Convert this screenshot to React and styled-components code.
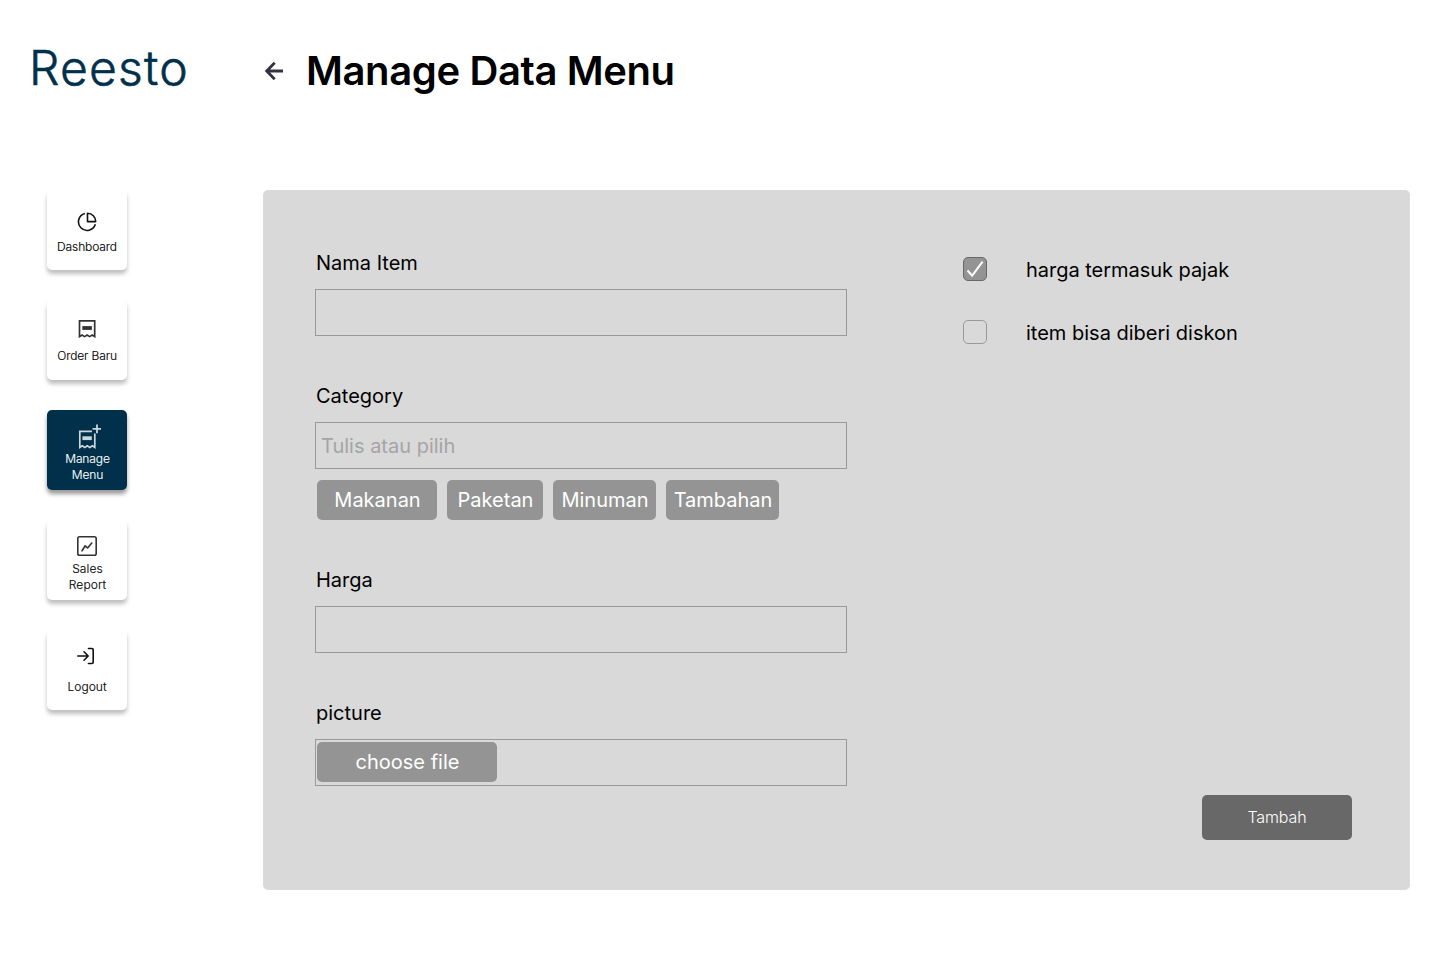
import React from 'react';
import styled, { createGlobalStyle } from 'styled-components';

const GlobalStyle = createGlobalStyle`
  * { box-sizing: border-box; }
  body { margin: 0; background: #fff; font-family: Inter, sans-serif; color: #000; }
  button, input { font-family: inherit; }
`;

const Page = styled.div`
  display: grid;
  grid-template-columns: 263px 1147px;
  grid-template-rows: 190px 700px;
  width: 1440px;
  height: 960px;
  overflow: hidden;
`;

const Logo = styled.div`
  padding: 39px 0 0 29px;
  font-size: 48px;
  line-height: 58px;
  font-weight: 300;
  letter-spacing: 1.2px;
  color: #00304a;
  -webkit-text-stroke: 0.6px #00304a;
  white-space: nowrap;
`;

const Header = styled.header`
  display: flex;
  align-items: flex-start;
  padding-top: 46px;
`;

const BackButton = styled.button`
  width: 22px;
  height: 50px;
  padding: 0;
  border: 0;
  background: none;
  display: flex;
  align-items: center;
  margin-right: 21px;
`;

const Title = styled.h1`
  margin: 0;
  font-size: 40px;
  line-height: 50px;
  font-weight: 600;
  letter-spacing: -0.38px;
  white-space: nowrap;
`;

const Nav = styled.nav`
  display: flex;
  flex-direction: column;
  gap: 30px;
  padding-left: 47px;
`;

const NavCard = styled.a`
  display: flex;
  flex-direction: column;
  align-items: center;
  width: 80px;
  height: 80px;
  padding-top: ${(p) => p.$top}px;
  border-radius: 5px;
  background: ${(p) => (p.$active ? '#00304a' : '#fff')};
  color: ${(p) => (p.$active ? '#fff' : '#000')};
  box-shadow: 0 4px 4px rgba(0, 0, 0, ${(p) => (p.$active ? 0.4 : 0.25)});
  svg { display: block; flex: none; }
`;

const NavLabel = styled.span`
  margin-top: ${(p) => p.$gap}px;
  padding-left: ${(p) => p.$shift || 0}px;
  font-size: 12px;
  line-height: 16px;
  font-weight: 300;
  -webkit-text-stroke: 0.15px currentColor;
  letter-spacing: ${(p) => p.$track}px;
  text-align: center;
  white-space: pre-line;
`;

const Panel = styled.main`
  display: flex;
  justify-content: space-between;
  background: #d9d9d9;
  border-radius: 5px;
  padding: 60px 58px 50px 52px;
`;

const Form = styled.form`
  width: 532px;
`;

const Field = styled.div`
  display: flex;
  flex-direction: column;
  height: ${(p) => p.$height}px;
`;

const Label = styled.label`
  height: 39px;
  padding-left: 1px;
  font-size: 20px;
  line-height: 26px;
`;

const Input = styled.input`
  width: 532px;
  height: 47px;
  padding: 0 5px;
  border: 1px solid #999;
  border-radius: 0;
  outline: 0;
  background: transparent;
  font-size: 20px;
  &::placeholder { color: #a5a5a5; opacity: 1; }
`;

const FileBox = styled.div`
  width: 532px;
  height: 47px;
  padding: 2px 1px;
  border: 1px solid #999;
`;

const Chips = styled.div`
  display: flex;
  gap: 10px;
  padding: 11px 0 0 2px;
`;

const Chip = styled.button`
  width: ${(p) => p.$width}px;
  height: 40px;
  padding: 0 0 0 1px;
  border: 0;
  border-radius: 5px;
  background: #949494;
  color: #fff;
  font-size: 20px;
  line-height: 40px;
  white-space: nowrap;
`;

const Side = styled.aside`
  display: flex;
  flex-direction: column;
  width: 389px;
  padding-top: 7px;
`;

const Option = styled.label`
  display: flex;
  align-items: flex-start;
  gap: 39px;
  height: 63px;
  font-size: 20px;
  line-height: 26px;
  letter-spacing: ${(p) => p.$track || 0}px;
`;

const CheckBox = styled.span`
  display: flex;
  flex: none;
  width: 24px;
  height: 24px;
  border: 1px solid ${(p) => (p.$checked ? '#686868' : '#999')};
  border-radius: 5px;
  background: ${(p) => (p.$checked ? '#949494' : 'transparent')};
`;

const Submit = styled.button`
  width: 150px;
  height: 45px;
  margin: auto 0 0 auto;
  padding: 0 0 2px;
  border: 0;
  border-radius: 5px;
  background: #686868;
  color: #fff;
  font-size: 16px;
  font-weight: 300;
  letter-spacing: -0.1px;
`;

const BackIcon = () => (
  <svg width="22" height="22" viewBox="0 0 22 22" fill="none" stroke="#343140" strokeWidth="2.8">
    <path d="M20 11H4M11.7 2.8L3.7 11L11.7 19.2" />
  </svg>
);

const PieIcon = () => (
  <svg width="20" height="20" viewBox="0 0 20 20" fill="none" stroke="#111" strokeWidth="1.6" strokeLinejoin="round">
    <path d="M7.9 1.5A8.6 8.6 0 1 0 18.3 12.3" />
    <path d="M10.5 1.2V9.6H18.7A8.3 8.3 0 0 0 10.5 1.2Z" />
  </svg>
);

const OrderIcon = () => (
  <svg width="18" height="19" viewBox="0 0 18 19" fill="none" stroke="#333">
    <path d="M1.5 17.6V1.8H16.7V17.6L14.2 16L11.7 17.6L9.1 16L6.6 17.6L4 16Z" strokeWidth="1.7" />
    <path d="M4.3 9H13.9" strokeWidth="3.8" />
  </svg>
);

const ManageIcon = () => (
  <svg width="28" height="26" viewBox="0 0 28 26" fill="none" stroke="#ccd6db">
    <path d="M19 8.4H6.8V24.4L9.3 22.8L11.8 24.4L14.3 22.8L16.8 24.4L19.3 22.8L21.8 24.4V10.5" strokeWidth="1.7" />
    <path d="M9.4 15.2H18.8" strokeWidth="3.8" />
    <path d="M24 1.4V10.2M19.6 5.8H28" strokeWidth="1.8" />
  </svg>
);

const ChartIcon = () => (
  <svg width="20" height="20" viewBox="0 0 20 20" fill="none" stroke="#333" strokeWidth="1.6" strokeLinecap="round" strokeLinejoin="round">
    <rect x="0.8" y="0.8" width="18.4" height="18.4" rx="1.8" />
    <path d="M5 14.8L8.2 9.8L10.6 12L14.8 7" />
  </svg>
);

const LogoutIcon = () => (
  <svg width="20" height="18" viewBox="0 0 20 18" fill="none" stroke="#111" strokeWidth="1.6" strokeLinecap="round" strokeLinejoin="round">
    <path d="M0.8 9H11M7 4.8L11.2 9L7 13.2M11.5 1.5H15Q16.2 1.5 16.2 2.7V15.3Q16.2 16.5 15 16.5H11.5" />
  </svg>
);

const CheckIcon = () => (
  <svg width="22" height="22" viewBox="0 0 22 22" fill="none" stroke="#fff" strokeWidth="2">
    <path d="M3.5 12.5L8.2 17.7L18.6 3.7" />
  </svg>
);

export default function App() {
  return (
    <Page>
      <GlobalStyle />
      <Logo>Reesto</Logo>
      <Header>
        <BackButton aria-label="Back"><BackIcon /></BackButton>
        <Title>Manage Data Menu</Title>
      </Header>
      <Nav>
        <NavCard $top={22}><PieIcon /><NavLabel $gap={7} $track={-0.1}>Dashboard</NavLabel></NavCard>
        <NavCard $top={19}><OrderIcon /><NavLabel $gap={10} $track={-0.12}>Order Baru</NavLabel></NavCard>
        <NavCard $top={13} $active><ManageIcon /><NavLabel $gap={2} $shift={1} $track={-0.1}>{'Manage\nMenu'}</NavLabel></NavCard>
        <NavCard $top={16}><ChartIcon /><NavLabel $gap={5} $shift={1} $track={0.1}>{'Sales\nReport'}</NavLabel></NavCard>
        <NavCard $top={17}><LogoutIcon /><NavLabel $gap={14} $track={0.05}>Logout</NavLabel></NavCard>
      </Nav>
      <Panel>
        <Form>
          <Field $height={133}>
            <Label htmlFor="name">Nama Item</Label>
            <Input id="name" />
          </Field>
          <Field $height={184}>
            <Label htmlFor="category">Category</Label>
            <Input id="category" placeholder="Tulis atau pilih" />
            <Chips>
              <Chip type="button" $width={120}>Makanan</Chip>
              <Chip type="button" $width={96}>Paketan</Chip>
              <Chip type="button" $width={103}>Minuman</Chip>
              <Chip type="button" $width={113}>Tambahan</Chip>
            </Chips>
          </Field>
          <Field $height={133}>
            <Label htmlFor="price">Harga</Label>
            <Input id="price" />
          </Field>
          <Field $height={86}>
            <Label>picture</Label>
            <FileBox><Chip type="button" $width={180}>choose file</Chip></FileBox>
          </Field>
        </Form>
        <Side>
          <Option $track={-0.03}><CheckBox $checked><CheckIcon /></CheckBox>harga termasuk pajak</Option>
          <Option><CheckBox />item bisa diberi diskon</Option>
          <Submit type="button">Tambah</Submit>
        </Side>
      </Panel>
    </Page>
  );
}
